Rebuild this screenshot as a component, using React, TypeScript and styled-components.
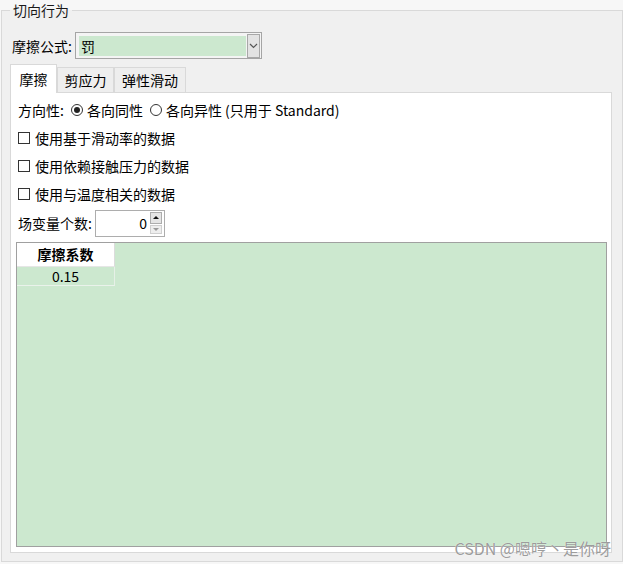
import React from 'react'
import styled, { createGlobalStyle } from 'styled-components'

const GREEN = '#cce8cf'

const Global = createGlobalStyle`
  html, body {
    margin: 0;
    padding: 0;
    background: #f7f7f7;
  }
  body {
    font-family: "Noto Sans CJK SC", "Microsoft YaHei", sans-serif;
    font-size: 14px;
    color: #000;
  }
`

const Page = styled.div`
  position: relative;
  width: 623px;
  height: 564px;
  padding-left: 1px;
  box-sizing: border-box;
  overflow: hidden;
`

// 分组框 "切向行为"
const Group = styled.fieldset`
  margin: 0;
  width: 622px;
  box-sizing: border-box;
  padding: 0 10px 8px 8px;
  border: 1px solid #d9d9d9;
  background: #f0f0f0;
`

const Legend = styled.legend`
  padding: 0 3px;
  line-height: 20px;
  font-size: 14px;
  color: #1a1a1a;
`

const Body = styled.div`
  height: 533px;
  display: flex;
  flex-direction: column;
`

const FormulaRow = styled.div`
  display: flex;
  align-items: center;
  margin-top: 12px;
  padding-left: 2px;
  gap: 3px;
  height: 27px;
`

const Label = styled.span`
  line-height: 20px;
  white-space: nowrap;
`

const Combo = styled.div`
  width: 187px;
  height: 27px;
  box-sizing: border-box;
  border: 1px solid #a5a5a5;
  background: #f4f4f4;
  display: flex;
  padding: 3px 1px 1px 3px;
`

const ComboValue = styled.div`
  flex: 1;
  background: ${GREEN};
  line-height: 20px;
  padding-left: 2px;
  margin-bottom: 1px;
`

const DropButton = styled.div`
  width: 11px;
  margin: -2px 0 -1px 1px;
  border: 1px solid #a8a8a8;
  background: #e3e3e3;
  display: flex;
  align-items: center;
  justify-content: center;
`

const TabBar = styled.div`
  display: flex;
  align-items: flex-end;
  height: 28px;
  margin-top: 5px;
`

const Tab = styled.div<{ $active?: boolean; $w: number }>`
  position: relative;
  z-index: ${p => (p.$active ? 2 : 1)};
  width: ${p => p.$w}px;
  height: ${p => (p.$active ? '29px' : '25px')};
  margin-bottom: ${p => (p.$active ? '-1px' : '0')};
  box-sizing: border-box;
  border: 1px solid #d9d9d9;
  border-bottom: none;
  background: ${p => (p.$active ? '#fff' : '#eeeeee')};
  display: flex;
  align-items: center;
  justify-content: center;
  line-height: 20px;
  white-space: nowrap;
`

const Panel = styled.div`
  flex: 1;
  background: #fff;
  border: 1px solid #d9d9d9;
  display: flex;
  flex-direction: column;
  padding: 3px 4px 5px 5px;
`

const Row = styled.div<{ $h?: number }>`
  display: flex;
  align-items: center;
  height: ${p => p.$h ?? 28}px;
  padding-left: 2px;
  flex-shrink: 0;
`

const Radio = styled.span<{ $on?: boolean; $gap: number }>`
  width: 12px;
  height: 12px;
  box-sizing: border-box;
  border: 1px solid #333;
  border-radius: 50%;
  margin-left: ${p => p.$gap}px;
  margin-right: 4px;
  background: #fff;
  display: flex;
  align-items: center;
  justify-content: center;
  &::after {
    content: '';
    display: ${p => (p.$on ? 'block' : 'none')};
    width: 6px;
    height: 6px;
    border-radius: 50%;
    background: #222;
  }
`

const Check = styled.span`
  width: 12px;
  height: 12px;
  box-sizing: border-box;
  border: 1px solid #333;
  background: #fff;
  margin-right: 5px;
`

const Spin = styled.div`
  width: 70px;
  height: 27px;
  box-sizing: border-box;
  margin-left: 3px;
  border: 1px solid #adadad;
  background: #fff;
  display: flex;
`

const SpinValue = styled.div`
  flex: 1;
  text-align: right;
  line-height: 25px;
  padding-right: 3px;
`

const SpinButtons = styled.div`
  width: 12px;
  margin: 1px 2px 2px 0;
  display: flex;
  flex-direction: column;
  gap: 1px;
`

const SpinBtn = styled.div<{ $down?: boolean }>`
  flex: ${p => (p.$down ? '0 0 9px' : '1')};
  box-sizing: border-box;
  border: 1px solid ${p => (p.$down ? '#cfcfcf' : '#adadad')};
  background: ${p => (p.$down ? '#eeeeee' : '#e5e5e5')};
  display: flex;
  align-items: center;
  justify-content: center;
  &::after {
    content: '';
    width: 0;
    height: 0;
    border-left: 3px solid transparent;
    border-right: 3px solid transparent;
    ${p =>
      p.$down
        ? 'border-top: 3px solid #9a9a9a;'
        : 'border-bottom: 3px solid #111;'}
  }
`

const Table = styled.div`
  flex: 1;
  margin-top: 4px;
  border: 1px solid #a0a0a0;
  background: ${GREEN};
  display: flex;
  align-items: flex-start;
`

const Column = styled.div`
  width: 98px;
  display: flex;
  flex-direction: column;
`

const HeadCell = styled.div`
  height: 24px;
  box-sizing: border-box;
  background: #fff;
  border-right: 1px solid #dcdcdc;
  border-bottom: 1px solid #e6e6e6;
  text-align: center;
  font-weight: bold;
  line-height: 23px;
`

const Cell = styled.div`
  height: 19px;
  box-sizing: border-box;
  background: ${GREEN};
  border-right: 1px solid #e6f0e7;
  border-bottom: 1px solid #eaf2eb;
  text-align: center;
  line-height: 18px;
`

const Watermark = styled.div`
  position: absolute;
  right: 12px;
  bottom: 7px;
  font-size: 16px;
  line-height: 18px;
  color: #9c9c9c;
  text-shadow: 0 0 1px #fff;
  white-space: nowrap;
`

function Chevron() {
  return (
    <svg width="9" height="6" viewBox="0 0 9 6">
      <polyline points="1,1 4.5,4.5 8,1" fill="none" stroke="#555" strokeWidth="1.2" />
    </svg>
  )
}

export default function App() {
  return (
    <Page>
      <Global />
      <Group>
        <Legend>切向行为</Legend>
        <Body>
          <FormulaRow>
            <Label>摩擦公式:</Label>
            <Combo>
              <ComboValue>罚</ComboValue>
              <DropButton>
                <Chevron />
              </DropButton>
            </Combo>
          </FormulaRow>

          <TabBar>
            <Tab $active $w={47}>摩擦</Tab>
            <Tab $w={57}>剪应力</Tab>
            <Tab $w={72}>弹性滑动</Tab>
          </TabBar>

          <Panel>
            <Row>
              <Label>方向性:</Label>
              <Radio $on $gap={7} />
              <Label>各向同性</Label>
              <Radio $gap={7} />
              <Label>各向异性 (只用于 Standard)</Label>
            </Row>
            <Row>
              <Check />
              <Label>使用基于滑动率的数据</Label>
            </Row>
            <Row>
              <Check />
              <Label>使用依赖接触压力的数据</Label>
            </Row>
            <Row>
              <Check />
              <Label>使用与温度相关的数据</Label>
            </Row>
            <Row $h={30}>
              <Label>场变量个数:</Label>
              <Spin>
                <SpinValue>0</SpinValue>
                <SpinButtons>
                  <SpinBtn />
                  <SpinBtn $down />
                </SpinButtons>
              </Spin>
            </Row>

            <Table>
              <Column>
                <HeadCell>摩擦系数</HeadCell>
                <Cell>0.15</Cell>
              </Column>
            </Table>
          </Panel>
        </Body>
      </Group>
      <Watermark>CSDN @嗯哼丶是你呀</Watermark>
    </Page>
  )
}
